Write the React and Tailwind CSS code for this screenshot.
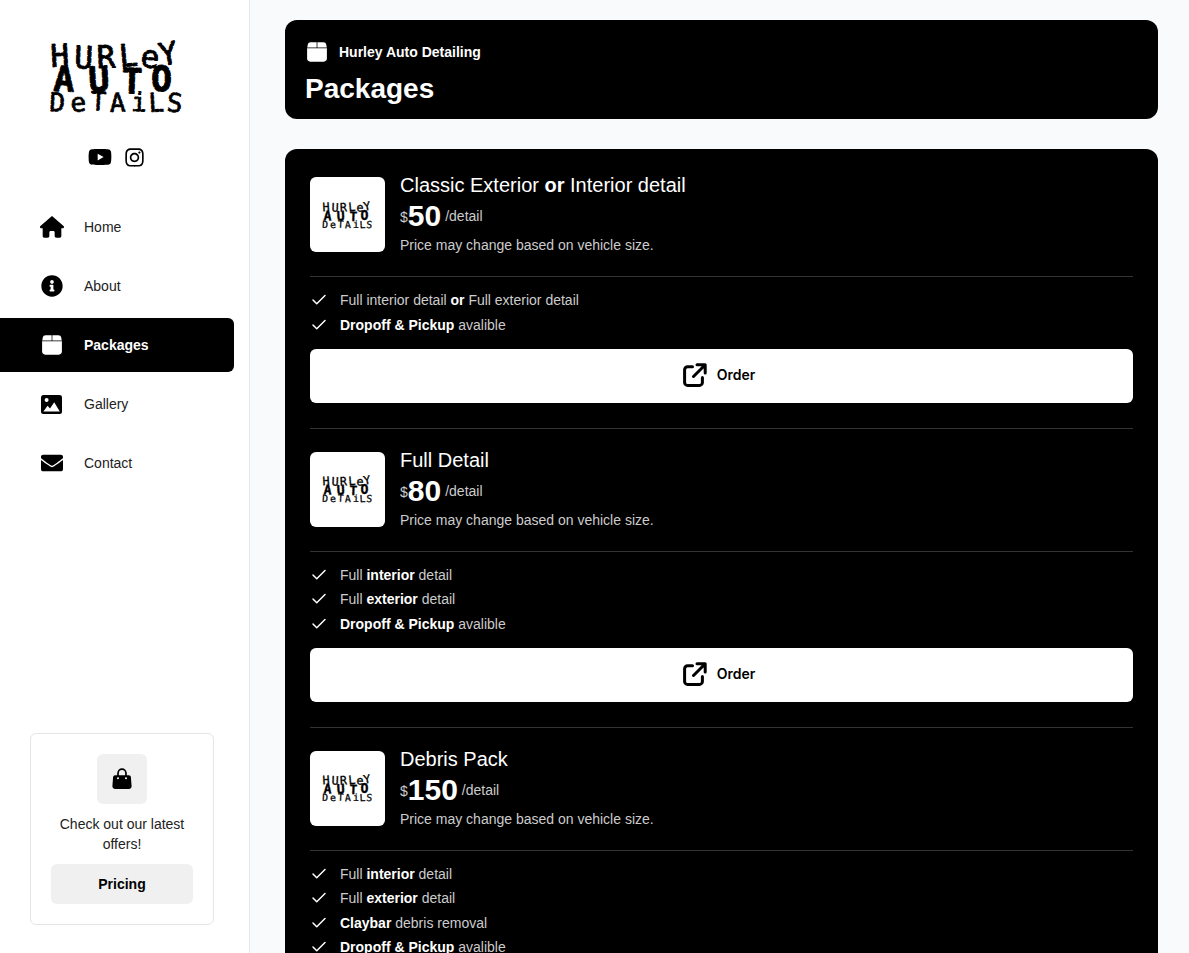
import { Check } from "lucide-react";
import { FaInfoCircle, FaEnvelope, FaYoutube, FaInstagram } from "react-icons/fa";
import { FaHouse } from "react-icons/fa6";

const FONT = "font-['Liberation_Sans',Arial,sans-serif]";

const BoxIcon = ({ className }) => (
  <svg viewBox="0 0 20 20" className={className} fill="currentColor">
    <path d="M3.6 0.3 H9.6 V5.6 H0.2 L0.8 2.6 C1.1 1.1 2.2 0.3 3.6 0.3 Z" />
    <path d="M10.4 0.3 H16.4 C17.8 0.3 18.9 1.1 19.2 2.6 L19.8 5.6 H10.4 Z" />
    <path d="M0.1 6.3 H19.9 V16.6 C19.9 18.4 18.5 19.7 16.8 19.7 H3.2 C1.5 19.7 0.1 18.4 0.1 16.6 Z" />
  </svg>
);

const BagIcon = ({ className }) => (
  <svg viewBox="0 0 20 22" className={className} fill="currentColor">
    <path d="M6 8 V5.5 C6 3 7.8 1.2 10 1.2 C12.2 1.2 14 3 14 5.5 V8" fill="none" stroke="currentColor" strokeWidth="1.7" />
    <path d="M3.2 7.2 H16.8 C18 7.2 18.8 8 18.9 9.1 L19.6 18 C19.7 19.6 18.6 21 16.9 21 H3.1 C1.4 21 0.3 19.6 0.4 18 L1.1 9.1 C1.2 8 2 7.2 3.2 7.2 Z" />
    <circle cx="6" cy="10.2" r="1" fill="#fff" />
    <circle cx="14" cy="10.2" r="1" fill="#fff" />
  </svg>
);

const ImageIcon = ({ className }) => (
  <svg viewBox="0 0 21 19" className={className}>
    <rect width="21" height="19" rx="2.5" fill="currentColor" />
    <circle cx="5.6" cy="5" r="2" fill="#fff" />
    <path d="M2.4 16.6 L6.6 10.8 L9 13.4 L13.2 7.2 L18.8 16.6 Z" fill="#fff" />
  </svg>
);

const OrderIcon = ({ className }) => (
  <svg viewBox="0 0 24 24" className={className} fill="none" stroke="currentColor" strokeWidth="3" strokeLinecap="round" strokeLinejoin="round">
    <path d="M9.5 3.8 H4.6 A3 3 0 0 0 1.6 6.8 V19.4 A3 3 0 0 0 4.6 22.4 H16.4 A3 3 0 0 0 19.4 19.4 V14.5" />
    <path d="M10.5 13.5 L22 2 M14 1.8 H22.2 V10" />
  </svg>
);

// brush lettering of the logo, kept as real text with uneven letters
const Logo = ({ className }) => (
  <svg
    viewBox="0 0 138 74"
    className={`${className} overflow-visible`}
    fill="#000"
    stroke="#000"
    strokeLinejoin="bevel"
    fontFamily="'DejaVu Sans Mono', monospace"
  >
    <text x="2 25 48 71 91 112" y="27 28 28 27 27 26" rotate="-3 2 -2 -5 4 -10" fontSize="31" strokeWidth="1.1" strokeDasharray="5 1">
      HURLeY
    </text>
    <text x="4 40 72 102" y="51 52 53 51" rotate="2 -3 2 0" fontSize="35" fontWeight="700" strokeWidth="1" strokeDasharray="6 1">
      AUTO
    </text>
    <text x="0 22 41 61 82 100 117" y="71 72 70 72 71 72 71" rotate="3 -4 3 -2 2 -3 6" fontSize="26" strokeWidth="0.9" strokeDasharray="4 1">
      DeTAiLS
    </text>
  </svg>
);

const NAV = [
  { label: "Home", icon: <FaHouse className="w-6 h-[22px]" /> },
  { label: "About", icon: <FaInfoCircle className="w-[22px] h-[22px] ml-[1px]" /> },
  { label: "Packages", icon: <BoxIcon className="w-5 h-5 ml-[2px]" />, active: true },
  { label: "Gallery", icon: <ImageIcon className="w-[21px] h-[19px] ml-[1px]" /> },
  { label: "Contact", icon: <FaEnvelope className="w-[22px] h-[22px] ml-[1px]" /> },
];

const PACKAGES = [
  {
    title: (
      <>
        Classic Exterior <b>or</b> Interior detail
      </>
    ),
    price: "50",
    features: [
      <>
        Full interior detail <b className="text-white">or</b> Full exterior detail
      </>,
      <>
        <b className="text-white">Dropoff &amp; Pickup</b> avalible
      </>,
    ],
  },
  {
    title: "Full Detail",
    price: "80",
    features: [
      <>
        Full <b className="text-white">interior</b> detail
      </>,
      <>
        Full <b className="text-white">exterior</b> detail
      </>,
      <>
        <b className="text-white">Dropoff &amp; Pickup</b> avalible
      </>,
    ],
  },
  {
    title: "Debris Pack",
    price: "150",
    features: [
      <>
        Full <b className="text-white">interior</b> detail
      </>,
      <>
        Full <b className="text-white">exterior</b> detail
      </>,
      <>
        <b className="text-white">Claybar</b> debris removal
      </>,
      <>
        <b className="text-white">Dropoff &amp; Pickup</b> avalible
      </>,
    ],
  },
];

const Sidebar = () => (
  <aside className="w-[250px] shrink-0 h-screen bg-white border-r border-[#e5e7eb] flex flex-col">
    <div className="flex justify-center pt-[40px] pr-[13px]">
      <Logo className="w-[138px] h-[74px]" />
    </div>
    <div className="flex justify-center items-center gap-[12px] mt-[31px] pr-[17px] text-black">
      <FaYoutube className="w-[24px] h-[24px]" />
      <FaInstagram className="w-[21px] h-[21px]" />
    </div>
    <nav className="mt-[31px] pr-[15px] flex flex-col gap-[5px]">
      {NAV.map((item) => (
        <div
          key={item.label}
          className={
            item.active
              ? "h-[54px] flex items-center bg-black text-white rounded-r-md font-bold"
              : "h-[54px] flex items-center text-[#222]"
          }
        >
          <div className={item.active ? "w-[84px] pl-[40px] flex text-white" : "w-[84px] pl-[40px] flex text-black"}>
            {item.icon}
          </div>
          <span className="text-sm">{item.label}</span>
        </div>
      ))}
    </nav>
    <div className="mt-auto mx-[30px] mb-[28px] w-[184px] h-[192px] border border-[#e5e5e5] rounded-md flex flex-col items-center pt-[20px] px-[20px]">
      <div className="w-[50px] h-[50px] rounded-md bg-[#f0f0f0] flex items-center justify-center">
        <BagIcon className="w-[20px] h-[22px] text-black" />
      </div>
      <p className="mt-[10px] text-sm leading-[20px] text-center text-[#222]">Check out our latest offers!</p>
      <button className="mt-[10px] w-full h-[40px] rounded-md bg-[#f0f0f0] text-sm font-bold text-black">Pricing</button>
    </div>
  </aside>
);

const PackageItem = ({ pkg, last }) => (
  <div>
    <div className="flex gap-[15px] h-[75px]">
      <div className="w-[75px] h-[75px] bg-white rounded-md flex items-center justify-center shrink-0">
        <Logo className="w-[52px] h-[28px]" />
      </div>
      <div className="-mt-[4px]">
        <div className="text-[20px] leading-[24px] text-white">{pkg.title}</div>
        <div className="flex items-center mt-[3px] h-[32px]">
          <span className="text-sm text-[#ccc] mt-[2px]">$</span>
          <span className="text-[30px] leading-[32px] font-bold text-white">{pkg.price}</span>
          <span className="text-sm text-[#ccc] ml-[4px]">/detail</span>
        </div>
        <div className="text-sm text-[#ccc] mt-[3px] leading-[20px]">Price may change based on vehicle size.</div>
      </div>
    </div>
    <div className="h-px bg-[#333] mt-[24px]" />
    <ul className="mt-[13px] flex flex-col gap-[4.5px]">
      {pkg.features.map((f, i) => (
        <li key={i} className="flex items-center gap-[12px] h-[20px] text-sm text-[#ccc]">
          <Check className="w-[18px] h-[18px] text-white" strokeWidth={2} />
          <span>{f}</span>
        </li>
      ))}
    </ul>
    <button className="mt-[14px] w-full h-[54px] bg-white rounded-md flex items-center justify-center gap-[10px] pr-[5px] pb-[2px] text-sm font-semibold text-black font-['Inter',sans-serif]">
      <OrderIcon className="w-[24px] h-[24px] mt-[1px]" />
      Order
    </button>
    {!last && <div className="h-px bg-[#333] mt-[25px] mb-[23px]" />}
  </div>
);

export default function App() {
  return (
    <div className={`${FONT} h-screen overflow-hidden flex bg-[#f9fafc]`}>
      <Sidebar />
      <main className="flex-1 min-w-0 pt-[20px] pl-[35px] pr-[31px]">
        <header className="h-[99px] bg-black rounded-xl pt-[21px] pl-[20px] text-white">
          <div className="flex items-center gap-[12px] h-[22px]">
            <BoxIcon className="w-5 h-5 ml-[2px]" />
            <span className="text-sm font-bold">Hurley Auto Detailing</span>
          </div>
          <h1 className="mt-[8px] text-[28px] leading-[36px] font-bold">Packages</h1>
        </header>
        <section className="mt-[30px] bg-black rounded-xl pt-[28px] px-[25px] pb-[25px]">
          {PACKAGES.map((pkg, i) => (
            <PackageItem key={i} pkg={pkg} last={i === PACKAGES.length - 1} />
          ))}
        </section>
      </main>
    </div>
  );
}
